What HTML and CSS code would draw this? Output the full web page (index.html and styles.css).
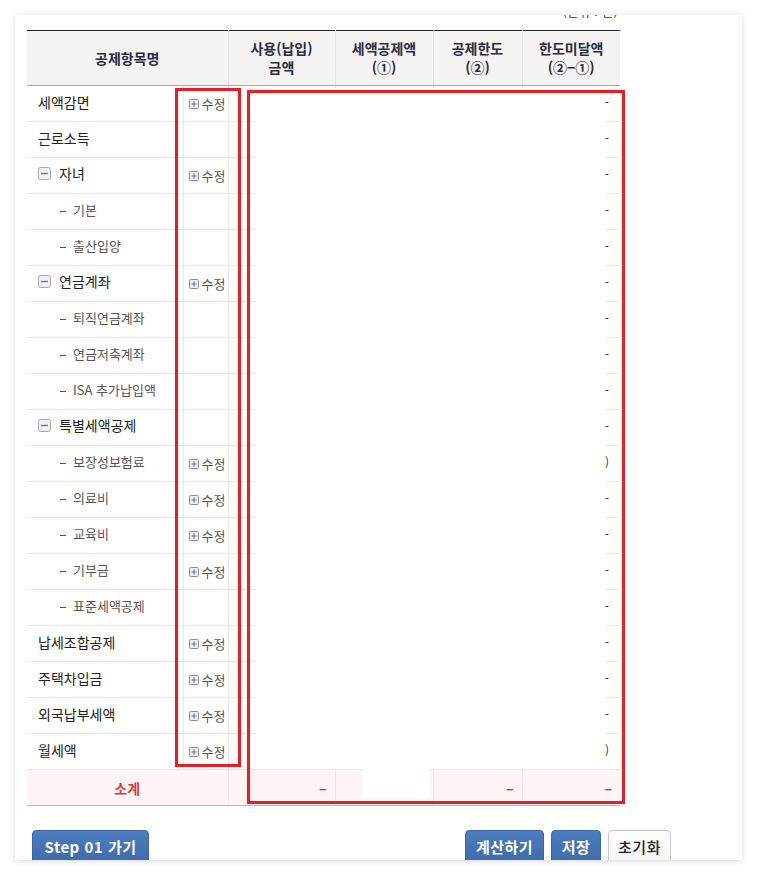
FILE: index.html
```html
<!DOCTYPE html>
<html lang="ko">
<head>
<meta charset="utf-8">
<title>세액공제</title>
<link rel="stylesheet" href="styles.css">
</head>
<body>
<div class="page">
  <div class="card">
    <div class="inner">
      <div class="unit"><span>(단위 : 원)</span></div>
      <div class="sheet">
        <table class="grid">
          <colgroup>
            <col class="w-name"><col class="w-edit"><col class="w-c1"><col class="w-c2"><col class="w-c3"><col class="w-c4">
          </colgroup>
          <thead>
            <tr>
              <th colspan="2">공제항목명</th>
              <th>사용(납입)<br>금액</th>
              <th>세액공제액<br>(①)</th>
              <th>공제한도<br>(②)</th>
              <th>한도미달액<br>(②−①)</th>
            </tr>
          </thead>
          <tbody>
            <tr><td class="name main">세액감면</td><td class="edit"><span class="btn-edit"><svg class="ico-plus" viewBox="0 0 10 10"><rect x="0.5" y="0.5" width="9" height="9" rx="1" fill="#ececec" stroke="#8e8e8e"/><path d="M2.5 5H7.5M5 2.5V7.5" stroke="#4b7fc4" stroke-width="1.2"/></svg>수정</span></td><td></td><td></td><td></td><td class="val">-</td></tr>
            <tr><td class="name main">근로소득</td><td class="edit"></td><td></td><td></td><td></td><td class="val">-</td></tr>
            <tr><td class="name main"><span class="grp"><svg class="ico-minus" viewBox="0 0 13 13"><rect x="0.5" y="0.5" width="12" height="12" rx="2" fill="#f1f1f1" stroke="#a8a8a8"/><path d="M3 6.5H10" stroke="#4f7fc0" stroke-width="1.4"/></svg>자녀</span></td><td class="edit"><span class="btn-edit"><svg class="ico-plus" viewBox="0 0 10 10"><rect x="0.5" y="0.5" width="9" height="9" rx="1" fill="#ececec" stroke="#8e8e8e"/><path d="M2.5 5H7.5M5 2.5V7.5" stroke="#4b7fc4" stroke-width="1.2"/></svg>수정</span></td><td></td><td></td><td></td><td class="val">-</td></tr>
            <tr><td class="name sub"><span class="dash"></span>기본</td><td class="edit"></td><td></td><td></td><td></td><td class="val">-</td></tr>
            <tr><td class="name sub"><span class="dash"></span>출산입양</td><td class="edit"></td><td></td><td></td><td></td><td class="val">-</td></tr>
            <tr><td class="name main"><span class="grp"><svg class="ico-minus" viewBox="0 0 13 13"><rect x="0.5" y="0.5" width="12" height="12" rx="2" fill="#f1f1f1" stroke="#a8a8a8"/><path d="M3 6.5H10" stroke="#4f7fc0" stroke-width="1.4"/></svg>연금계좌</span></td><td class="edit"><span class="btn-edit"><svg class="ico-plus" viewBox="0 0 10 10"><rect x="0.5" y="0.5" width="9" height="9" rx="1" fill="#ececec" stroke="#8e8e8e"/><path d="M2.5 5H7.5M5 2.5V7.5" stroke="#4b7fc4" stroke-width="1.2"/></svg>수정</span></td><td></td><td></td><td></td><td class="val">-</td></tr>
            <tr><td class="name sub"><span class="dash"></span>퇴직연금계좌</td><td class="edit"></td><td></td><td></td><td></td><td class="val">-</td></tr>
            <tr><td class="name sub"><span class="dash"></span>연금저축계좌</td><td class="edit"></td><td></td><td></td><td></td><td class="val">-</td></tr>
            <tr><td class="name sub"><span class="dash"></span>ISA 추가납입액</td><td class="edit"></td><td></td><td></td><td></td><td class="val">-</td></tr>
            <tr><td class="name main"><span class="grp"><svg class="ico-minus" viewBox="0 0 13 13"><rect x="0.5" y="0.5" width="12" height="12" rx="2" fill="#f1f1f1" stroke="#a8a8a8"/><path d="M3 6.5H10" stroke="#4f7fc0" stroke-width="1.4"/></svg>특별세액공제</span></td><td class="edit"></td><td></td><td></td><td></td><td class="val">-</td></tr>
            <tr><td class="name sub"><span class="dash"></span>보장성보험료</td><td class="edit"><span class="btn-edit"><svg class="ico-plus" viewBox="0 0 10 10"><rect x="0.5" y="0.5" width="9" height="9" rx="1" fill="#ececec" stroke="#8e8e8e"/><path d="M2.5 5H7.5M5 2.5V7.5" stroke="#4b7fc4" stroke-width="1.2"/></svg>수정</span></td><td></td><td></td><td></td><td class="val">)</td></tr>
            <tr><td class="name sub"><span class="dash"></span>의료비</td><td class="edit"><span class="btn-edit"><svg class="ico-plus" viewBox="0 0 10 10"><rect x="0.5" y="0.5" width="9" height="9" rx="1" fill="#ececec" stroke="#8e8e8e"/><path d="M2.5 5H7.5M5 2.5V7.5" stroke="#4b7fc4" stroke-width="1.2"/></svg>수정</span></td><td></td><td></td><td></td><td class="val">-</td></tr>
            <tr><td class="name sub"><span class="dash"></span>교육비</td><td class="edit"><span class="btn-edit"><svg class="ico-plus" viewBox="0 0 10 10"><rect x="0.5" y="0.5" width="9" height="9" rx="1" fill="#ececec" stroke="#8e8e8e"/><path d="M2.5 5H7.5M5 2.5V7.5" stroke="#4b7fc4" stroke-width="1.2"/></svg>수정</span></td><td></td><td></td><td></td><td class="val">-</td></tr>
            <tr><td class="name sub"><span class="dash"></span>기부금</td><td class="edit"><span class="btn-edit"><svg class="ico-plus" viewBox="0 0 10 10"><rect x="0.5" y="0.5" width="9" height="9" rx="1" fill="#ececec" stroke="#8e8e8e"/><path d="M2.5 5H7.5M5 2.5V7.5" stroke="#4b7fc4" stroke-width="1.2"/></svg>수정</span></td><td></td><td></td><td></td><td class="val">-</td></tr>
            <tr><td class="name sub"><span class="dash"></span>표준세액공제</td><td class="edit"></td><td></td><td></td><td></td><td class="val">-</td></tr>
            <tr><td class="name main">납세조합공제</td><td class="edit"><span class="btn-edit"><svg class="ico-plus" viewBox="0 0 10 10"><rect x="0.5" y="0.5" width="9" height="9" rx="1" fill="#ececec" stroke="#8e8e8e"/><path d="M2.5 5H7.5M5 2.5V7.5" stroke="#4b7fc4" stroke-width="1.2"/></svg>수정</span></td><td></td><td></td><td></td><td class="val">-</td></tr>
            <tr><td class="name main">주택차입금</td><td class="edit"><span class="btn-edit"><svg class="ico-plus" viewBox="0 0 10 10"><rect x="0.5" y="0.5" width="9" height="9" rx="1" fill="#ececec" stroke="#8e8e8e"/><path d="M2.5 5H7.5M5 2.5V7.5" stroke="#4b7fc4" stroke-width="1.2"/></svg>수정</span></td><td></td><td></td><td></td><td class="val">-</td></tr>
            <tr><td class="name main">외국납부세액</td><td class="edit"><span class="btn-edit"><svg class="ico-plus" viewBox="0 0 10 10"><rect x="0.5" y="0.5" width="9" height="9" rx="1" fill="#ececec" stroke="#8e8e8e"/><path d="M2.5 5H7.5M5 2.5V7.5" stroke="#4b7fc4" stroke-width="1.2"/></svg>수정</span></td><td></td><td></td><td></td><td class="val">-</td></tr>
            <tr><td class="name main">월세액</td><td class="edit"><span class="btn-edit"><svg class="ico-plus" viewBox="0 0 10 10"><rect x="0.5" y="0.5" width="9" height="9" rx="1" fill="#ececec" stroke="#8e8e8e"/><path d="M2.5 5H7.5M5 2.5V7.5" stroke="#4b7fc4" stroke-width="1.2"/></svg>수정</span></td><td></td><td></td><td></td><td class="val">)</td></tr>
          </tbody>
          <tfoot>
            <tr class="total">
              <td colspan="2" class="total-label">소계</td>
              <td class="val">–</td>
              <td class="val">–</td>
              <td class="val">–</td>
              <td class="val">–</td>
            </tr>
          </tfoot>
        </table>
        <div class="mask mask-data"></div>
        <div class="mask mask-total"></div>
        <div class="mark mark-edit"></div>
        <div class="mark mark-data"></div>
      </div>
      <div class="actions">
        <button class="btn btn-blue btn-step" type="button">Step 01 가기</button>
        <div class="actions-right">
          <button class="btn btn-blue btn-calc" type="button">계산하기</button>
          <button class="btn btn-blue btn-save" type="button">저장</button>
          <button class="btn btn-white btn-reset" type="button">초기화</button>
        </div>
      </div>
    </div>
  </div>
</div>
</body>
</html>
```
FILE: styles.css
```css
html, body {
  margin: 0;
  background: #ffffff;
}
body {
  font-family: "Noto Sans CJK KR", "Noto Sans", sans-serif;
  color: #222;
}
.page {
  padding: 15px;
}
.card {
  width: 727px;
  height: 845px;
  box-sizing: border-box;
  padding: 0 12px;
  background: #fff;
  overflow: hidden;
  box-shadow: 0 1px 6px rgba(0, 0, 0, 0.16);
}
.inner {
  width: 649px;
}
.unit {
  width: 593px;
  height: 4px;
  overflow: hidden;
  display: flex;
  justify-content: flex-end;
  align-items: flex-end;
  font-size: 12px;
  line-height: 14px;
  color: #333;
}
.unit span {
  margin-right: 2px;
  letter-spacing: 0.5px;
}
.sheet {
  position: relative;
  width: 593px;
  margin-top: 11px;
}
.grid {
  width: 593px;
  border-collapse: collapse;
  table-layout: fixed;
}
.w-name { width: 156px; }
.w-edit { width: 45px; }
.w-c1 { width: 107px; }
.w-c2 { width: 98px; }
.w-c3 { width: 89px; }
.w-c4 { width: 98px; }

.grid thead tr {
  border-top: 1px solid #1e1e1e;
}
.grid th {
  height: 54px;
  padding: 0;
  background: #f4f3f1;
  border-bottom: 1px solid #a8a8a8;
  border-left: 1px solid #e3e3e3;
  font-size: 14px;
  font-weight: 700;
  line-height: 19px;
  color: #2c2c3e;
  text-align: center;
  vertical-align: middle;
}
.grid th:first-child {
  border-left: none;
}
.grid td {
  height: 31px;
  padding: 0 0 4px 0;
  border-bottom: 1px solid #e8e8e8;
  vertical-align: middle;
}
.grid td + td {
  border-left: 1px solid #e8e8e8;
}
.name {
  white-space: nowrap;
}
.name.main {
  padding-left: 11px;
  font-size: 14px;
  color: #222;
}
.name.sub {
  padding-left: 33px;
  font-size: 13px;
  color: #555;
}
.grp {
  display: inline-flex;
  align-items: center;
}
.ico-minus {
  width: 13px;
  height: 13px;
  margin-right: 8px;
  flex: none;
}
.dash {
  display: inline-block;
  width: 6px;
  height: 1px;
  background: #555;
  vertical-align: middle;
  margin-right: 7px;
}
.grid td.edit {
  padding-left: 5px;
}
.btn-edit {
  display: inline-flex;
  align-items: center;
  font-size: 13px;
  color: #555;
  white-space: nowrap;
}
.ico-plus {
  width: 10px;
  height: 10px;
  margin-right: 3px;
  flex: none;
}
.grid td.val {
  text-align: right;
  padding-right: 11px;
  font-size: 12px;
  color: #333;
}
.grid .total td {
  height: 35px;
  padding-bottom: 0;
  background: #fdf5f5;
  border-top: 1px solid #e8e8e8;
  border-bottom: 1px solid #f4a3a3;
}
.total-label {
  text-align: center;
  font-size: 14px;
  font-weight: 700;
  color: #d83a44;
}
.grid .total td.val {
  color: #e8262f;
  font-size: 14px;
  font-weight: 700;
  line-height: 20px;
  padding-right: 8px;
}

.mask {
  position: absolute;
  background: #fff;
}
.mask-data {
  left: 229px;
  top: 58px;
  width: 349px;
  height: 681px;
}
.mask-total {
  left: 335px;
  top: 738px;
  width: 68px;
  height: 30px;
}
.mark {
  position: absolute;
  box-sizing: border-box;
  border: 3px solid #ed1c24;
}
.mark-edit {
  left: 148px;
  top: 58px;
  width: 66px;
  height: 679px;
}
.mark-data {
  left: 220px;
  top: 60px;
  width: 378px;
  height: 714px;
}

.actions {
  display: flex;
  justify-content: space-between;
  padding: 0 5px;
  margin-top: 24px;
}
.actions-right {
  display: flex;
  gap: 7px;
}
.btn {
  height: 34px;
  padding: 0;
  border-radius: 4px;
  font-family: "Noto Sans CJK KR", sans-serif;
  font-size: 15px;
  font-weight: 700;
  line-height: 30px;
  letter-spacing: 0.5px;
  white-space: nowrap;
  text-align: center;
  cursor: pointer;
}
.btn-blue {
  color: #fff;
  background: linear-gradient(#4c7ec0, #3d6aab);
  border: 1px solid #3b67a7;
}
.btn-white {
  color: #222;
  background: linear-gradient(#ffffff, #f3f3f3);
  border: 1px solid #c8c8c8;
  font-weight: 500;
}
.btn-step { width: 117px; }
.btn-calc { width: 79px; }
.btn-save { width: 50px; }
.btn-reset { width: 63px; }
```
